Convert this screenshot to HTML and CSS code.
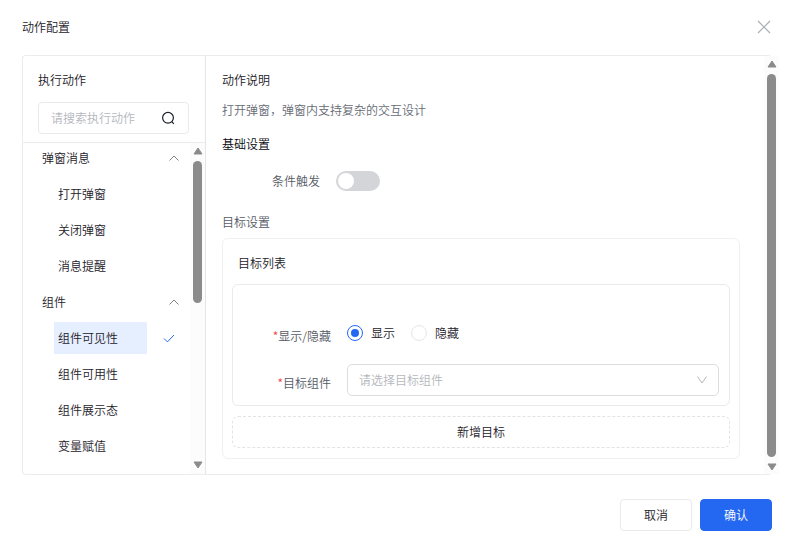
FILE: index.html
```html
<!DOCTYPE html>
<html lang="zh-CN">
<head>
    <meta charset="UTF-8">
    <meta name="viewport" content="width=device-width, initial-scale=1.0">
    <title>动作配置</title>
    <link rel="stylesheet" href="styles.css">
</head>
<body>
    <div class="modal">
        <header class="modal-header">
            <h1>动作配置</h1>
            <button type="button" class="close" aria-label="关闭">
                <svg width="14" height="14" viewBox="0 0 14 14"><path d="M1 1l12 12M13 1L1 13"/></svg>
            </button>
        </header>

        <div class="panel">
            <aside class="sidebar">
                <div class="sidebar-top">
                    <h2>执行动作</h2>
                    <div class="search">
                        <input type="text" placeholder="请搜索执行动作" aria-label="请搜索执行动作">
                        <button type="button" aria-label="搜索">
                            <svg width="14" height="14" viewBox="0 0 14 14"><circle cx="7" cy="6.8" r="5.4"/><path d="M10.8 10.6l2 2.2"/></svg>
                        </button>
                    </div>
                </div>
                <div class="sidebar-list">
                    <nav class="actions">
                        <button type="button" class="group">弹窗消息
                            <svg width="10" height="6" viewBox="0 0 10 6"><path d="M0.5 5.5L5 1l4.5 4.5"/></svg>
                        </button>
                        <a href="#"><span>打开弹窗</span></a>
                        <a href="#"><span>关闭弹窗</span></a>
                        <a href="#"><span>消息提醒</span></a>
                        <button type="button" class="group">组件
                            <svg width="10" height="6" viewBox="0 0 10 6"><path d="M0.5 5.5L5 1l4.5 4.5"/></svg>
                        </button>
                        <a href="#" class="active"><span>组件可见性</span>
                            <svg width="12" height="10" viewBox="0 0 12 10"><path d="M1 5.5l3.4 3.4L11 2"/></svg>
                        </a>
                        <a href="#"><span>组件可用性</span></a>
                        <a href="#"><span>组件展示态</span></a>
                        <a href="#"><span>变量赋值</span></a>
                    </nav>
                    <div class="scrollbar scrollbar-short">
                        <svg width="10" height="8" viewBox="0 0 10 8"><path d="M5 1L9 7H1z"/></svg>
                        <div class="thumb"></div>
                        <svg width="10" height="8" viewBox="0 0 10 8"><path d="M5 7L9 1H1z"/></svg>
                    </div>
                </div>
            </aside>

            <main class="content">
                <h2>动作说明</h2>
                <p class="desc">打开弹窗，弹窗内支持复杂的交互设计</p>
                <h2 class="basic">基础设置</h2>
                <div class="switch-row">
                    <label for="condition">条件触发</label>
                    <input type="checkbox" id="condition" class="switch">
                </div>
                <h3>目标设置</h3>
                <section class="card">
                    <h2>目标列表</h2>
                    <div class="target">
                        <div class="field" role="radiogroup" aria-labelledby="visibleLabel">
                            <span class="field-label" id="visibleLabel"><i>*</i>显示/隐藏</span>
                            <label class="radio"><input type="radio" name="visible" checked>显示</label>
                            <label class="radio"><input type="radio" name="visible">隐藏</label>
                        </div>
                        <div class="field">
                            <label class="field-label" for="component"><i>*</i>目标组件</label>
                            <div class="select">
                                <select id="component">
                                    <option value="">请选择目标组件</option>
                                </select>
                                <svg width="10" height="8" viewBox="0 0 10 8"><path d="M0.5 0.5L5 7l4.5-6.5"/></svg>
                            </div>
                        </div>
                    </div>
                    <button type="button" class="add">新增目标</button>
                </section>
            </main>

            <div class="scrollbar scrollbar-main">
                <svg width="10" height="8" viewBox="0 0 10 8"><path d="M5 1L9 7H1z"/></svg>
                <div class="thumb"></div>
                <svg width="10" height="8" viewBox="0 0 10 8"><path d="M5 7L9 1H1z"/></svg>
            </div>
        </div>

        <footer class="modal-footer">
            <button type="button" class="btn">取消</button>
            <button type="button" class="btn btn-primary">确认</button>
        </footer>
    </div>
</body>
</html>
```
FILE: styles.css
```css
* {
    box-sizing: border-box;
}

body {
    margin: 0;
    background: #fff;
    color: #1d2129;
    font-family: 'Noto Sans CJK SC', sans-serif;
    font-size: 12px;
    font-weight: 350;
    line-height: 16px;
}

h1, h2, h3, p {
    margin: 0;
    font-size: 12px;
    font-weight: 350;
}

button, input, select {
    margin: 0;
    padding: 0;
    border: none;
    background: none;
    color: inherit;
    font: inherit;
}

button {
    cursor: pointer;
}

svg {
    display: block;
    flex: none;
    fill: none;
    stroke: currentColor;
}

.modal {
    display: flex;
    flex-direction: column;
    min-height: 100vh;
    padding: 0 18px 19px 22px;
}

.modal-header {
    display: flex;
    justify-content: space-between;
    align-items: center;
    height: 55px;
    padding-bottom: 2px;
}

.close {
    padding: 1px;
    color: #a9adb5;
}

.close svg {
    stroke-width: 1.2;
}

.panel {
    display: flex;
    flex: 1;
    border: 1px solid #ebecee;
    border-right: none;
    border-radius: 4px;
}

/* left column */
.sidebar {
    display: flex;
    flex-direction: column;
    width: 183px;
    border-right: 1px solid #e5e6eb;
}

.sidebar-top {
    padding: 16px 16px 8px 15px;
    margin-bottom: -1px;
    border-bottom: 1px solid #ebecee;
}

.search {
    display: flex;
    align-items: center;
    height: 32px;
    margin-top: 14px;
    padding: 0 13px 0 12px;
    border: 1px solid #e9eaec;
    border-radius: 4px;
}

.search input {
    flex: 1;
    min-width: 0;
    outline: none;
}

.search input::placeholder {
    color: #b4b7bd;
}

.search svg {
    stroke-width: 1.2;
}

.sidebar-list {
    display: flex;
    flex: 1;
}

.actions {
    display: flex;
    flex: 1;
    flex-direction: column;
    gap: 4px;
}

.actions .group {
    display: flex;
    justify-content: space-between;
    align-items: center;
    height: 32px;
    padding: 0 11px 0 19px;
}

.actions .group svg {
    color: #7b818b;
}

.actions a {
    display: flex;
    justify-content: space-between;
    align-items: center;
    padding: 0 15px 0 31px;
    color: inherit;
    text-decoration: none;
}

.actions a span {
    width: 93px;
    padding: 8px 4px;
}

.actions .active span {
    background: #e6efff;
}

.actions .active svg {
    color: #2468f2;
}

/* scrollbars */
.scrollbar {
    display: flex;
    flex-direction: column;
    flex: none;
    align-items: center;
    gap: 6px;
    width: 15px;
    background: #fcfcfc;
    color: #8b8b8b;
}

.scrollbar svg {
    fill: currentColor;
    stroke-linejoin: round;
}

.scrollbar svg:last-child {
    margin-top: auto;
}

.thumb {
    flex: 1;
    width: 9px;
    border-radius: 5px;
    background: #8b8b8b;
}

.scrollbar-short {
    margin-top: 1px;
    padding: 4px 0 5px;
}

.scrollbar-short .thumb {
    flex: 0 0 44%;
}

.scrollbar-main {
    margin-right: -7px;
    padding: 4px 0 3px;
}

/* right column */
.content {
    flex: 1;
    padding: 16px 24px 15px 16px;
}

.desc {
    margin-top: 14px;
    color: #666b74;
}

.content .basic {
    margin-top: 18px;
    color: #05080f;
}

.switch-row {
    display: flex;
    align-items: center;
    gap: 16px;
    margin-top: 19px;
    padding-left: 50px;
    color: #565b65;
}

.switch {
    appearance: none;
    width: 44px;
    height: 20px;
    padding: 2px;
    border-radius: 10px;
    background: #d4d5d9;
}

.switch::before {
    content: '';
    display: block;
    width: 16px;
    height: 16px;
    border-radius: 50%;
    background: #fff;
}

.content h3 {
    margin-top: 23px;
    color: #565b65;
}

.card {
    margin-top: 8px;
    padding: 16px 9px 10px;
    border: 1px solid #f0f0f1;
    border-radius: 6px;
}

.card h2 {
    padding-left: 6px;
}

.target {
    display: flex;
    flex-direction: column;
    gap: 15px;
    margin: 13px 0 10px;
    padding: 32px 10px 9px;
    border: 1px solid #e9eaec;
    border-radius: 6px;
}

.field {
    display: flex;
    align-items: center;
    gap: 16px;
    height: 32px;
}

.field-label {
    width: 88px;
    padding-top: 6px;
    color: #565b65;
    text-align: right;
}

.field-label i {
    color: #f33e3e;
    font-style: normal;
}

.radio {
    display: flex;
    align-items: center;
    gap: 8px;
}

.radio input {
    appearance: none;
    width: 16px;
    height: 16px;
    border: 1px solid #e5e6eb;
    border-radius: 50%;
}

.radio input:checked {
    padding: 3px;
    border-color: #2468f2;
    background: #2468f2 content-box;
}

.select {
    display: flex;
    flex: 1;
    align-items: center;
    height: 32px;
    padding-right: 11px;
    border: 1px solid #dcdde0;
    border-radius: 5px;
    color: #b4b7bd;
}

.select select {
    appearance: none;
    flex: 1;
    padding-left: 11px;
    outline: none;
}

.add {
    display: block;
    width: 100%;
    height: 32px;
    border: 1px dashed #e2e3e5;
    border-radius: 6px;
}

/* footer */
.modal-footer {
    display: flex;
    justify-content: flex-end;
    gap: 8px;
    margin-top: 24px;
}

.btn {
    width: 72px;
    height: 32px;
    border: 1px solid #e9eaec;
    border-radius: 4px;
}

.btn-primary {
    border-color: #2468f2;
    background: #2468f2;
    color: #fff;
}
```
